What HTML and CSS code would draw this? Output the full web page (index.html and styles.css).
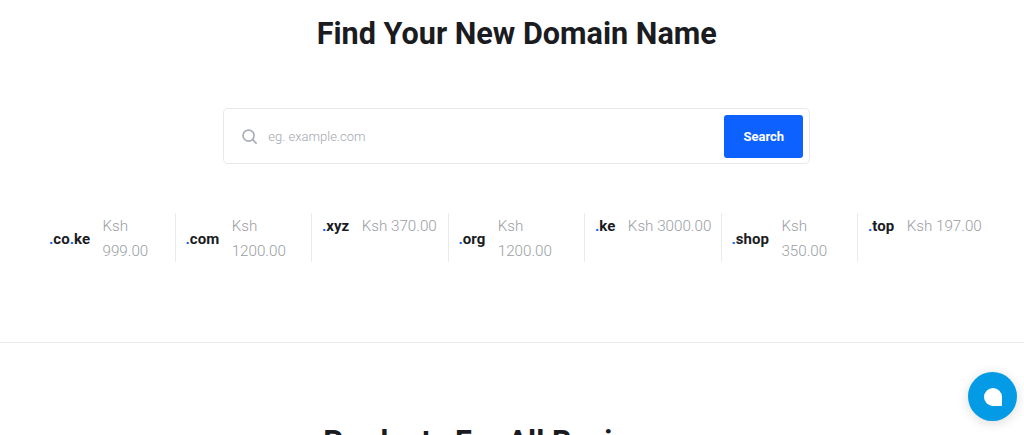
FILE: index.html
```html
<!DOCTYPE html>
<html>
<head>
    <title>Find Your New Domain Name</title>
    <link rel="stylesheet" href="styles.css">
</head>
<body>

    <section class="domain-section">
        <h1 class="title">Find Your New Domain Name</h1>

        <!-- Search box -->
        <form class="search-box">
            <svg class="search-icon" width="15" height="15" viewBox="0 0 16 16" fill="none" stroke="#a9afb8" stroke-width="1.8" stroke-linecap="round">
                <circle cx="7" cy="7" r="5.9"/>
                <path d="M11.4 11.4L15 15"/>
            </svg>
            <input class="search-input" type="text" placeholder="eg. example.com">
            <button class="search-btn" type="button">Search</button>
        </form>

        <!-- Domain prices -->
        <div class="tld-list">
            <div class="tld"><div class="tld-inner"><div class="tld-name"><span>.</span>co<span>.</span>ke</div><div class="tld-price">Ksh 999.00</div></div></div>
            <div class="tld"><div class="tld-inner"><div class="tld-name"><span>.</span>com</div><div class="tld-price">Ksh 1200.00</div></div></div>
            <div class="tld"><div class="tld-inner"><div class="tld-name"><span>.</span>xyz</div><div class="tld-price">Ksh 370.00</div></div></div>
            <div class="tld"><div class="tld-inner"><div class="tld-name"><span>.</span>org</div><div class="tld-price">Ksh 1200.00</div></div></div>
            <div class="tld"><div class="tld-inner"><div class="tld-name"><span>.</span>ke</div><div class="tld-price">Ksh 3000.00</div></div></div>
            <div class="tld"><div class="tld-inner"><div class="tld-name"><span>.</span>shop</div><div class="tld-price">Ksh 350.00</div></div></div>
            <div class="tld"><div class="tld-inner"><div class="tld-name"><span>.</span>top</div><div class="tld-price">Ksh 197.00</div></div></div>
        </div>
    </section>

    <section class="products-section">
        <h2 class="title">Products For All Businesses</h2>
    </section>

    <!-- Chat bubble -->
    <div class="chat-btn">
        <svg width="18" height="18" viewBox="0 0 18 18"><path fill="#fff" d="M9 0a9 9 0 0 1 9 9v8.2a.8.8 0 0 1-.8.8H9A9 9 0 0 1 9 0z"/></svg>
    </div>

</body>
</html>
```

FILE: styles.css
```css
html, body { height: 435px; overflow: hidden; }
body { margin: 0; background-color: #fff; font-family: Roboto, sans-serif; color: #1a1c1f; }
.title { margin: 0; font-size: 30.6px; line-height: 36px; font-weight: 700; text-align: center; }
.domain-section { padding: 16px 29.5px 0 39px; height: 326px; border-bottom: 1px solid #e9ebee; }
.search-box { display: flex; align-items: center; box-sizing: border-box; width: 587px; height: 56px; margin: 56px auto 0; padding: 0 6px 0 18px; border: 1px solid #e6e8eb; border-radius: 5px; background-color: #fff; }
.search-icon { flex: none; }
.search-input { flex: 1; min-width: 0; margin-left: 11px; padding: 0; border: 0; outline: 0; font-family: Roboto, sans-serif; font-size: 13px; font-weight: 300; color: #1a1c1f; }
.search-input::placeholder { color: #a3a7ad; opacity: 1; }
.search-btn { width: 79px; height: 43px; border: 0; border-radius: 3px; background-color: #0d62ff; color: #fff; font-family: Roboto, sans-serif; font-size: 13px; font-weight: 700; }
.tld-list { display: grid; grid-template-columns: repeat(7, minmax(0, 1fr)); margin-top: 49px; }
.tld { box-sizing: border-box; height: 49px; padding: 1px 8px 0 10px; border-right: 1px solid #e9ebee; }
.tld:last-child { border-right: 0; }
.tld-inner { display: flex; align-items: center; }
.tld-name { flex: none; margin-right: 12.5px; font-size: 15px; font-weight: 700; line-height: 25px; }
.tld-name span { color: #0d62ff; }
.tld-price { font-size: 15.2px; font-weight: 300; line-height: 25px; color: #9a9ea4; }
.products-section { padding: 81px 0 0 9px; }
.chat-btn { position: fixed; right: 7px; bottom: 14px; display: flex; align-items: center; justify-content: center; width: 49px; height: 49px; border-radius: 50%; background-color: #039be5; box-shadow: 0 2px 12px rgba(0, 0, 0, 0.15); }
```
